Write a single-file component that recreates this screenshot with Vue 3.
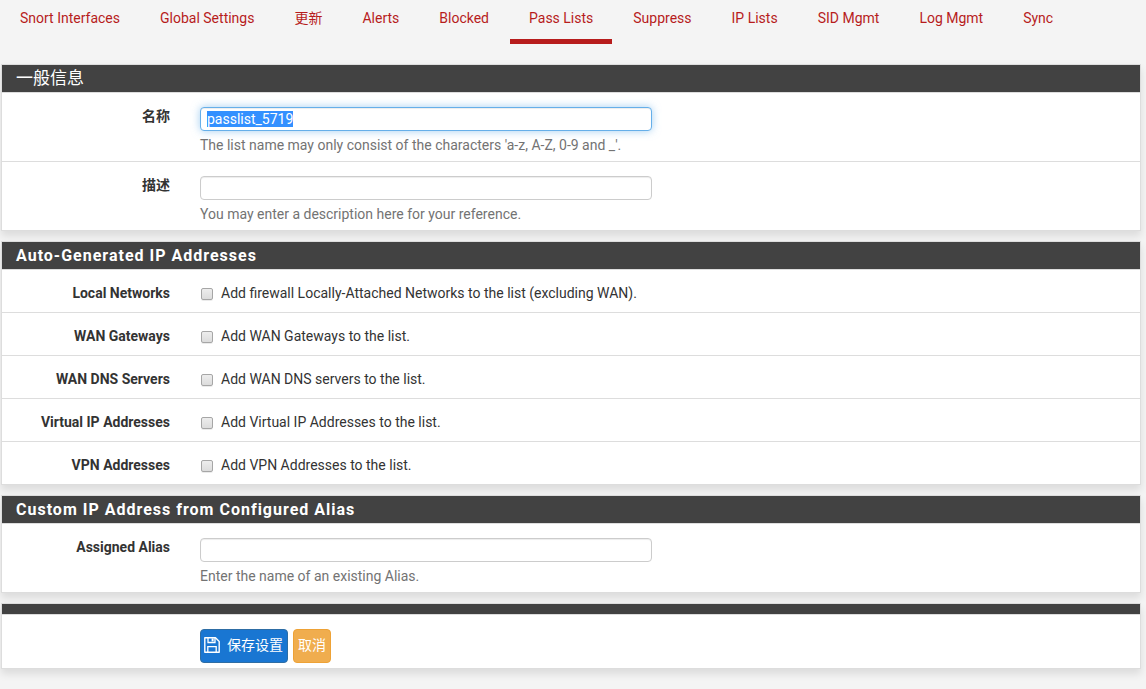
<script setup>
import { onMounted, ref } from 'vue'

const tabs = [
  'Snort Interfaces',
  'Global Settings',
  '更新',
  'Alerts',
  'Blocked',
  'Pass Lists',
  'Suppress',
  'IP Lists',
  'SID Mgmt',
  'Log Mgmt',
  'Sync',
]
const activeTab = 'Pass Lists'

const name = ref('passlist_5719')
const description = ref('')
const alias = ref('')
const nameInput = ref(null)

const sources = ref([
  { id: 'localnets', label: 'Local Networks', text: 'Add firewall Locally-Attached Networks to the list (excluding WAN).', checked: false },
  { id: 'wangateips', label: 'WAN Gateways', text: 'Add WAN Gateways to the list.', checked: false },
  { id: 'wandnsips', label: 'WAN DNS Servers', text: 'Add WAN DNS servers to the list.', checked: false },
  { id: 'vips', label: 'Virtual IP Addresses', text: 'Add Virtual IP Addresses to the list.', checked: false },
  { id: 'vpnips', label: 'VPN Addresses', text: 'Add VPN Addresses to the list.', checked: false },
])

onMounted(() => {
  nameInput.value.focus()
  nameInput.value.select()
})
</script>

<template>
  <div class="page">
    <nav class="tabs">
      <a v-for="tab in tabs" :key="tab" href="#" class="tab" :class="{ active: tab === activeTab }">{{ tab }}</a>
    </nav>

    <form class="panels" @submit.prevent>
      <section class="panel">
        <h2 class="heading cjk">一般信息</h2>
        <div class="row">
          <label class="label" for="name">名称</label>
          <div class="field">
            <input id="name" ref="nameInput" v-model="name" class="text-input" type="text" autocomplete="off" spellcheck="false">
            <span class="help">The list name may only consist of the characters 'a-z, A-Z, 0-9 and _'.</span>
          </div>
        </div>
        <div class="row">
          <label class="label" for="descr">描述</label>
          <div class="field">
            <input id="descr" v-model="description" class="text-input" type="text">
            <span class="help">You may enter a description here for your reference.</span>
          </div>
        </div>
      </section>

      <section class="panel">
        <h2 class="heading">Auto-Generated IP Addresses</h2>
        <div v-for="source in sources" :key="source.id" class="row check-row">
          <span class="label">{{ source.label }}</span>
          <label class="check">
            <input v-model="source.checked" class="box" type="checkbox">
            <span>{{ source.text }}</span>
          </label>
        </div>
      </section>

      <section class="panel">
        <h2 class="heading">Custom IP Address from Configured Alias</h2>
        <div class="row">
          <label class="label" for="alias">Assigned Alias</label>
          <div class="field">
            <input id="alias" v-model="alias" class="text-input" type="text">
            <span class="help">Enter the name of an existing Alias.</span>
          </div>
        </div>
      </section>

      <section class="panel">
        <div class="strip"></div>
        <div class="row actions">
          <button class="btn save" type="submit">
            <svg class="icon" viewBox="0 0 16 16" aria-hidden="true">
              <path fill="none" stroke="currentColor" stroke-width="1.4" stroke-linejoin="round" d="M.8.8h10.7l3.7 3.7v10.7H.8z" />
              <path fill="none" stroke="currentColor" stroke-width="1.3" d="M4 .8v4.7h7V.8M3.8 15.2V9.6h8.4v5.6" />
              <path fill="currentColor" d="M7.6 1.4h2v3h-2z" />
            </svg>
            <span>保存设置</span>
          </button>
          <button class="btn cancel" type="button">取消</button>
        </div>
      </section>
    </form>
  </div>
</template>

<style>
body {
  background: #f4f4f4;
}
</style>

<style scoped>
.page {
  font-family: Roboto, "Noto Sans CJK SC", sans-serif;
  font-size: 14px;
  line-height: 20px;
  color: #333;
  padding: 0 5px 20px 1px;
}

.page *,
.page {
  box-sizing: border-box;
}

.tabs {
  display: flex;
  gap: 2px;
  height: 44px;
  margin-bottom: 20px;
}

.tab {
  padding: 8px 19px 0;
  border-bottom: 5px solid transparent;
  color: #b71c1c;
  text-decoration: none;
  white-space: nowrap;
}

.tab.active {
  border-bottom-color: #b71c1c;
}

.panels {
  display: flex;
  flex-direction: column;
  gap: 10px;
}

.panel {
  background: #fff;
  border: 1px solid #ddd;
  box-shadow: 0 5px 8px rgba(0, 0, 0, 0.1);
}

.heading {
  margin: 0;
  padding: 0 14px;
  background: #424242;
  border-bottom: 1px solid #ddd;
  color: #fff;
  font-size: 16px;
  font-weight: 700;
  line-height: 27px;
  letter-spacing: 1px;
}

.heading.cjk {
  font-size: 17px;
  font-weight: 400;
  letter-spacing: 0;
}

.strip {
  height: 11px;
  background: #424242;
  border-bottom: 1px solid #ddd;
}

.row {
  display: flex;
  gap: 30px;
  padding: 13px 0 6px;
}

.row + .row {
  border-top: 1px solid #ddd;
}

.label {
  flex: none;
  width: 168px;
  text-align: right;
  font-weight: 700;
}

.field {
  flex: 1;
  min-width: 0;
  padding-top: 1px;
}

.text-input {
  display: block;
  width: calc(50% - 18px);
  height: 24px;
  margin-bottom: 4px;
  padding: 0 6px;
  background: #fff;
  border: 1px solid #ccc;
  border-radius: 4px;
  box-shadow: inset 0 1px 1px rgba(0, 0, 0, 0.075);
  color: #555;
  font: inherit;
}

.text-input:focus {
  border-color: #66afe9;
  outline: 0;
  box-shadow: inset 0 1px 1px rgba(0, 0, 0, 0.075), 0 0 8px rgba(102, 175, 233, 0.6);
}

.text-input::selection {
  background: #3390ff;
  color: #fff;
}

.help {
  display: block;
  color: #737373;
}

.check-row {
  padding: 13px 0 9px;
}

.check {
  display: flex;
  align-items: center;
  gap: 8px;
}

.box {
  appearance: none;
  width: 12px;
  height: 12px;
  margin: 2px 0 0 1px;
  border: 1px solid #a6a6a6;
  border-radius: 2px;
  background: linear-gradient(#ededed, #dcdcdc);
  box-shadow: 0 1px 0 rgba(0, 0, 0, 0.08);
}

.box:checked {
  background: #1976d2;
}

.actions {
  gap: 5px;
  padding: 14px 0 5px 198px;
}

.btn {
  display: flex;
  align-items: center;
  height: 34px;
  padding: 0 4px 2px;
  border: 1px solid;
  border-radius: 4px;
  color: #fff;
  font: inherit;
  white-space: nowrap;
}

.save {
  gap: 7px;
  padding-left: 3px;
  background: #1976d2;
  border-color: #2e6da4;
}

.cancel {
  background: #f0ad4e;
  border-color: #eea236;
}

.icon {
  width: 16px;
  height: 16px;
}
</style>
